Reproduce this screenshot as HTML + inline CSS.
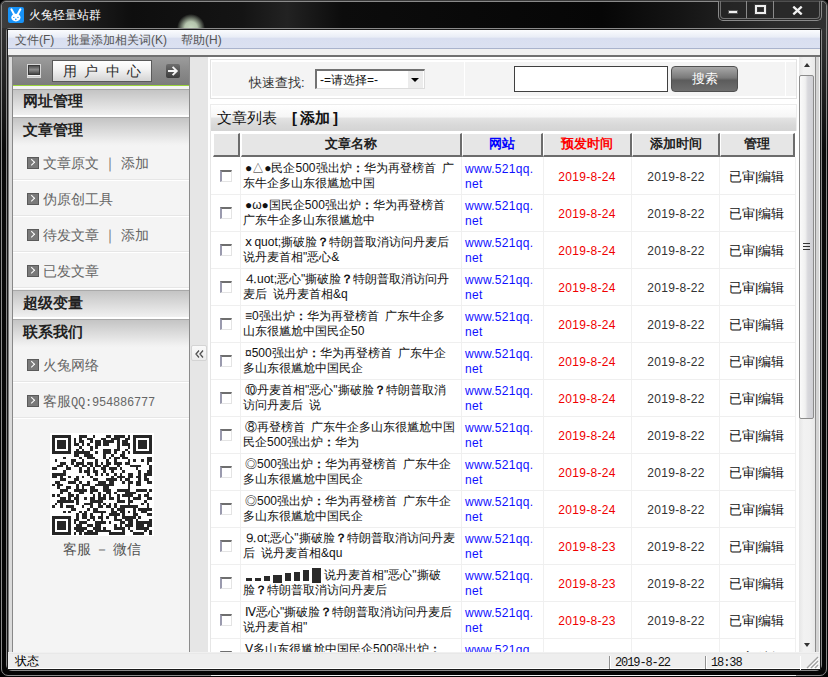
<!DOCTYPE html>
<html><head><meta charset="utf-8">
<style>
*{box-sizing:border-box;margin:0;padding:0}
html,body{width:828px;height:677px;overflow:hidden;background:#000}
body{font-family:"Liberation Sans",sans-serif;font-size:12px;color:#222;position:relative}
.a{position:absolute}
#win{left:0;top:0;width:828px;height:677px;background:linear-gradient(#3a3a3a,#2c2c2c 50px,#0a0a0a 150px,#050505);border-radius:6px 6px 8px 8px}
#fr1{left:1px;top:1px;width:826px;height:675px;border:1px solid #8a8a8a;border-radius:5px 5px 7px 7px}
#fr2{left:6px;top:28px;width:816px;height:643px;border:1px solid #8a8a8a;border-radius:3px 3px 6px 6px}
#title{left:2px;top:2px;width:824px;height:26px;background:linear-gradient(90deg,#3e3e3e 0,#2a2a2a 40px,#0e0e0e 130px,#141414 240px,#222 285px,#0c0c0c 340px,#060606 600px,#151515 680px,#2a2a2a 770px,#303030 824px);border-radius:4px 4px 0 0}
#glow{left:177px;top:14px;width:28px;height:28px;border-radius:50%;background:radial-gradient(closest-side,#c8d8c0 0,#b4c4ac 45%,rgba(150,170,140,0) 100%);clip-path:inset(0 0 14px 0)}
#ttext{left:29px;top:7px;font-size:12px;color:#fff}
#ticon{left:8px;top:7px;width:16px;height:16px;border-radius:2px;background:#1893f8}
#btns{left:718px;top:1px;width:104px;height:20px;border:1px solid #8a8a8a;border-top:none;border-radius:0 0 5px 5px;background:rgba(40,40,40,.6)}
#client{left:7px;top:29px;width:814px;height:641px;background:#f0f0f0;border:1px solid #1a1a1a}
#menu{left:8px;top:30px;width:812px;height:19px;background:linear-gradient(#fbfcfe,#e9edf6 40%,#d9dff0 45%,#dbe1f1);border-bottom:1px solid #a9b3cc}
#menu span{position:absolute;top:2px;font-size:12px;color:#555}
#darkline{left:8px;top:55px;width:812px;height:2px;background:#707070}
#left{left:8px;top:57px;width:182px;height:595px;background:#f4f4f4;border-left:1px solid #7a7a7a;border-right:1px solid #8c8c8c}
#lstrip{left:9px;top:57px;width:4px;height:595px;background:#dadada;border-right:1px solid #888}
#lhead{left:13px;top:57px;width:176px;height:28px;background:linear-gradient(#9c9c9c,#8a8a8a 50%,#7c7c7c)}
#green{left:13px;top:85px;width:176px;height:1px;background:#9ad43a}
.hd{position:absolute;left:13px;width:176px;height:29px;border-top:1px solid #a9a9a9;background:linear-gradient(#c4c4c4,#f0f0f0 92%,#fff 94%);font-size:15px;font-weight:bold;color:#222;padding:3px 0 0 10px}
.it{position:absolute;left:13px;width:176px;height:36px;font-size:14px;color:#666;padding:9px 0 0 30px;white-space:nowrap}
.it:after{content:"";position:absolute;left:0;top:33px;width:176px;height:1px;background:#e6e6e6;border-bottom:1px solid #fff}
.it i{position:absolute;left:14px;top:11px;width:12px;height:12px;background:#7a7a7a;border:1px solid #5a5a5a}
.it i:after{content:"";position:absolute;left:0.8px;top:2px;width:3.5px;height:3.5px;border-right:1.8px solid #fff;border-bottom:1.8px solid #fff;transform:rotate(-45deg)}
#split{left:190px;top:57px;width:19px;height:595px;background:#e6e6e6;border-right:1px solid #f6f6f6}
#sbtn{left:191px;top:345px;width:16px;height:16px;border:1px solid #d4d4d4;border-radius:2px;background:linear-gradient(#fafafa,#ececec);font-size:11px;color:#444;text-align:center;line-height:13px;letter-spacing:-2px}
#right{left:208px;top:57px;width:591px;height:595px;background:#fff}
#scroll{left:799px;top:57px;width:21px;height:595px;background:#ececec}
#status{left:8px;top:653px;width:812px;height:16px;background:#eeeeee;border-top:1px solid #e8e8e8;border-bottom:1px solid #fff}
#status span{position:absolute;top:3px;font-size:12px;color:#111}
.mono{font-family:"Liberation Mono",monospace;font-size:11px;letter-spacing:-1.1px}
/* right */
#sbox{left:210px;top:59px;width:587px;height:40px;border:1px solid #e2e2e2;background:#fff}
.sc{position:absolute;top:2px;height:34px;background:#f4f4f4}
#lhdr{left:210px;top:104px;width:587px;height:27px;border:1px solid #ececec;border-bottom:none;background:linear-gradient(#fff,#f6f6f6 45%,#e2e2e2 52%,#d8d8d8 80%,#d4d4d4)}
.th{position:absolute;top:133px;height:24px;background:#e6e6e6;border-top:1px solid #fff;border-left:1px solid #fff;border-right:2px solid #6c6c6c;border-bottom:2px solid #6c6c6c;font-weight:bold;font-size:13px;text-align:center;line-height:20px;color:#222}
.tr{position:absolute;left:211px;width:585px;height:38px;border-bottom:1px solid #efefef;letter-spacing:0.3px}
.tr>div{position:absolute;top:0}
.cb{left:9px!important;top:13px!important;width:12px;height:12px;border-top:2px solid #6e6e6e;border-left:2px solid #9a9aae;border-right:1px solid #e4e4e4;border-bottom:1px solid #e4e4e4;background:#fff}
.tt{left:32px;width:219px;font-size:12px;line-height:15px;padding-top:4px;letter-spacing:0;color:#111;white-space:nowrap}
.tt div:first-child{padding-left:2px}
.ws{left:254px;color:#1010ff;font-size:12px;line-height:15px;padding-top:5px}
.d1{left:332px;width:88px;text-align:center;color:#f00000;padding-top:13px}
.d2{left:422px;width:86px;text-align:center;color:#333;padding-top:13px}
.mg{left:508px;width:75px;text-align:center;color:#111;padding-top:11px;letter-spacing:-0.2px;font-size:13px}
.vl{position:absolute;top:157px;width:1px;height:495px;background:#f0f0f0}
</style></head><body>
<div id="win" class="a"></div>
<div id="fr1" class="a"></div>
<div id="title" class="a"></div>
<div id="fr2" class="a"></div>
<div id="glow" class="a"></div>
<div id="ticon" class="a"><svg width="16" height="16" viewBox="0 0 16 16"><path d="M3.4 2.3L6.2 7.5M12.4 2.3L9.6 7.5" stroke="#fff" stroke-width="2" stroke-linecap="round"/><ellipse cx="7.9" cy="10.6" rx="4.6" ry="3.9" fill="#fff"/><path d="M5 10.4h1.5M9.2 10.4h1.5" stroke="#1893f8" stroke-width="0.9"/><circle cx="7.8" cy="12.4" r="0.8" fill="#1893f8"/></svg></div>
<div id="ttext" class="a">火兔轻量站群</div>
<div id="btns" class="a"></div>
<div class="a" style="left:720px;top:1px;width:100px;height:18px;border:1px solid #707070;border-top:none;border-radius:0 0 4px 4px"></div>
<div class="a" style="left:746px;top:1px;width:1px;height:17px;background:#8a8a8a"></div>
<div class="a" style="left:773px;top:1px;width:1px;height:17px;background:#8a8a8a"></div>
<div class="a" style="left:728px;top:10px;width:10px;height:4px;background:#f0f0f0;border:1px solid #555"></div>
<div class="a" style="left:755px;top:5px;width:11px;height:9px;border:2px solid #eeeeee;border-top-width:2.5px;box-shadow:0 0 0 1px #3a3a3a,inset 0 0 0 1px #3a3a3a"></div>
<svg class="a" style="left:792px;top:6px" width="11" height="9" viewBox="0 0 11 9"><path d="M1.3 0.6L9.7 8.4M9.7 0.6L1.3 8.4" stroke="#f2f2f2" stroke-width="2.3"/></svg>
<div id="client" class="a"></div>
<div id="menu" class="a">
 <span style="left:7px">文件(F)</span>
 <span style="left:59px">批量添加相关词(K)</span>
 <span style="left:173px">帮助(H)</span>
</div>
<div id="darkline" class="a"></div>

<div id="left" class="a"></div>
<div id="lstrip" class="a"></div>
<div id="lhead" class="a"></div>
<div id="green" class="a"></div>
<div class="a" style="left:27px;top:64px;width:14px;height:14px;background:#f2f2f2;border:1px solid #d8d8d8"></div>
<div class="a" style="left:28px;top:65px;width:12px;height:10px;background:linear-gradient(#505050,#8a8a8a 45%,#7a7a7a 60%,#444);border:1px solid #3a3a3a"></div><div class="a" style="left:28px;top:76px;width:12px;height:1px;background:#c8c8c8"></div>
<div class="a" style="left:52px;top:60px;width:100px;height:22px;border:1px solid #5a5a5a;background:linear-gradient(#fff,#f4f4f4 40%,#d4d4d4);font-size:14px;color:#2a2a2a;letter-spacing:7.4px;padding-left:10px;line-height:20px;white-space:nowrap">用户中心</div>
<div class="a" style="left:166px;top:64px;width:14px;height:14px;border-radius:2px;background:linear-gradient(#6e6e6e,#3c3c3c)"></div>
<svg class="a" style="left:166px;top:64px" width="14" height="14" viewBox="0 0 14 14"><path d="M2 7h8.5M6.6 2.8L10.8 7L6.6 11.2" stroke="#f4f4f4" stroke-width="1.9" fill="none"/></svg>
<div class="hd" style="top:89px;height:28px;padding-top:2px">网址管理</div>
<div class="hd" style="top:117px;background:linear-gradient(#c4c4c4,#f2f2f2 92%,#f4f4f4)">文章管理</div>
<div class="it" style="top:146px"><i></i>文章原文 ｜ 添加</div>
<div class="it" style="top:182px"><i></i>伪原创工具</div>
<div class="it" style="top:218px"><i></i>待发文章 ｜ 添加</div>
<div class="it" style="top:254px"><i></i>已发文章</div>
<div class="hd" style="top:290px">超级变量</div>
<div class="hd" style="top:319px;background:linear-gradient(#c4c4c4,#f2f2f2 92%,#f4f4f4)">联系我们</div>
<div class="it" style="top:348px"><i></i>火兔网络</div>
<div class="it" style="top:384px"><i></i>客服<span style="font-family:'Liberation Mono',monospace;font-size:12px;letter-spacing:-0.2px">QQ:954886777</span></div>
<div class="a" style="left:50px;top:433px;width:104px;height:103px;background:#fff"></div>
<svg class="a" style="left:52px;top:435px" width="100" height="100" viewBox="0 0 37 37" shape-rendering="crispEdges"><path fill="#262626" d="M0 0h7v1h-7zM10 0h3v1h-3zM15 0h1v1h-1zM20 0h2v1h-2zM23 0h4v1h-4zM28 0h1v1h-1zM30 0h7v1h-7zM0 1h1v1h-1zM6 1h1v1h-1zM8 1h1v1h-1zM10 1h1v1h-1zM13 1h2v1h-2zM18 1h2v1h-2zM22 1h3v1h-3zM27 1h2v1h-2zM30 1h1v1h-1zM36 1h1v1h-1zM0 2h1v1h-1zM2 2h3v1h-3zM6 2h1v1h-1zM8 2h1v1h-1zM10 2h2v1h-2zM14 2h1v1h-1zM16 2h2v1h-2zM19 2h4v1h-4zM24 2h1v1h-1zM26 2h2v1h-2zM30 2h1v1h-1zM32 2h3v1h-3zM36 2h1v1h-1zM0 3h1v1h-1zM2 3h3v1h-3zM6 3h1v1h-1zM8 3h2v1h-2zM11 3h1v1h-1zM13 3h1v1h-1zM16 3h2v1h-2zM19 3h2v1h-2zM24 3h1v1h-1zM26 3h3v1h-3zM30 3h1v1h-1zM32 3h3v1h-3zM36 3h1v1h-1zM0 4h1v1h-1zM2 4h3v1h-3zM6 4h1v1h-1zM10 4h1v1h-1zM14 4h1v1h-1zM16 4h1v1h-1zM24 4h1v1h-1zM28 4h1v1h-1zM30 4h1v1h-1zM32 4h3v1h-3zM36 4h1v1h-1zM0 5h1v1h-1zM6 5h1v1h-1zM9 5h1v1h-1zM11 5h1v1h-1zM14 5h1v1h-1zM19 5h3v1h-3zM23 5h2v1h-2zM27 5h1v1h-1zM30 5h1v1h-1zM36 5h1v1h-1zM0 6h7v1h-7zM8 6h6v1h-6zM16 6h1v1h-1zM19 6h3v1h-3zM23 6h1v1h-1zM26 6h1v1h-1zM28 6h1v1h-1zM30 6h7v1h-7zM8 7h2v1h-2zM12 7h3v1h-3zM19 7h1v1h-1zM22 7h1v1h-1zM25 7h2v1h-2zM4 8h1v1h-1zM10 8h1v1h-1zM13 8h3v1h-3zM19 8h1v1h-1zM21 8h1v1h-1zM23 8h2v1h-2zM26 8h2v1h-2zM35 8h2v1h-2zM1 9h1v1h-1zM7 9h2v1h-2zM11 9h1v1h-1zM16 9h1v1h-1zM20 9h1v1h-1zM23 9h1v1h-1zM28 9h1v1h-1zM30 9h1v1h-1zM33 9h1v1h-1zM35 9h2v1h-2zM3 10h2v1h-2zM7 10h1v1h-1zM9 10h3v1h-3zM13 10h2v1h-2zM16 10h1v1h-1zM18 10h1v1h-1zM20 10h2v1h-2zM23 10h3v1h-3zM27 10h2v1h-2zM35 10h1v1h-1zM2 11h2v1h-2zM5 11h1v1h-1zM8 11h2v1h-2zM11 11h2v1h-2zM14 11h1v1h-1zM16 11h2v1h-2zM19 11h2v1h-2zM24 11h1v1h-1zM29 11h4v1h-4zM36 11h1v1h-1zM0 12h2v1h-2zM5 12h2v1h-2zM10 12h1v1h-1zM13 12h1v1h-1zM15 12h1v1h-1zM18 12h2v1h-2zM21 12h3v1h-3zM25 12h1v1h-1zM31 12h1v1h-1zM36 12h1v1h-1zM4 13h1v1h-1zM10 13h1v1h-1zM12 13h2v1h-2zM15 13h2v1h-2zM19 13h1v1h-1zM22 13h1v1h-1zM26 13h1v1h-1zM32 13h1v1h-1zM35 13h2v1h-2zM0 14h5v1h-5zM13 14h1v1h-1zM16 14h1v1h-1zM18 14h1v1h-1zM20 14h1v1h-1zM23 14h1v1h-1zM25 14h1v1h-1zM28 14h2v1h-2zM32 14h1v1h-1zM34 14h3v1h-3zM0 15h2v1h-2zM3 15h1v1h-1zM6 15h1v1h-1zM9 15h1v1h-1zM11 15h1v1h-1zM14 15h1v1h-1zM22 15h1v1h-1zM24 15h3v1h-3zM28 15h2v1h-2zM31 15h2v1h-2zM34 15h1v1h-1zM3 16h2v1h-2zM8 16h2v1h-2zM15 16h2v1h-2zM20 16h4v1h-4zM25 16h1v1h-1zM27 16h2v1h-2zM32 16h1v1h-1zM34 16h2v1h-2zM1 17h2v1h-2zM6 17h3v1h-3zM10 17h1v1h-1zM13 17h1v1h-1zM17 17h3v1h-3zM21 17h2v1h-2zM26 17h1v1h-1zM28 17h2v1h-2zM31 17h2v1h-2zM35 17h2v1h-2zM0 18h1v1h-1zM2 18h2v1h-2zM9 18h1v1h-1zM11 18h3v1h-3zM16 18h7v1h-7zM28 18h1v1h-1zM31 18h2v1h-2zM2 19h1v1h-1zM5 19h2v1h-2zM9 19h1v1h-1zM11 19h1v1h-1zM14 19h2v1h-2zM19 19h2v1h-2zM28 19h1v1h-1zM3 20h3v1h-3zM8 20h5v1h-5zM14 20h3v1h-3zM19 20h3v1h-3zM24 20h5v1h-5zM31 20h4v1h-4zM36 20h1v1h-1zM3 21h1v1h-1zM6 21h1v1h-1zM10 21h2v1h-2zM14 21h1v1h-1zM17 21h1v1h-1zM20 21h2v1h-2zM23 21h1v1h-1zM27 21h4v1h-4zM35 21h1v1h-1zM0 22h1v1h-1zM2 22h1v1h-1zM6 22h2v1h-2zM9 22h1v1h-1zM15 22h1v1h-1zM17 22h1v1h-1zM19 22h1v1h-1zM21 22h1v1h-1zM24 22h1v1h-1zM26 22h4v1h-4zM32 22h1v1h-1zM34 22h2v1h-2zM3 23h2v1h-2zM6 23h1v1h-1zM8 23h2v1h-2zM12 23h1v1h-1zM14 23h2v1h-2zM17 23h3v1h-3zM21 23h2v1h-2zM24 23h1v1h-1zM28 23h1v1h-1zM30 23h3v1h-3zM35 23h2v1h-2zM2 24h6v1h-6zM9 24h1v1h-1zM14 24h5v1h-5zM24 24h3v1h-3zM28 24h2v1h-2zM34 24h1v1h-1zM1 25h1v1h-1zM3 25h1v1h-1zM9 25h1v1h-1zM12 25h3v1h-3zM17 25h1v1h-1zM19 25h1v1h-1zM21 25h1v1h-1zM23 25h1v1h-1zM28 25h1v1h-1zM33 25h1v1h-1zM35 25h1v1h-1zM0 26h1v1h-1zM3 26h1v1h-1zM5 26h3v1h-3zM11 26h1v1h-1zM14 26h1v1h-1zM17 26h2v1h-2zM20 26h2v1h-2zM23 26h1v1h-1zM25 26h7v1h-7zM35 26h1v1h-1zM7 27h2v1h-2zM13 27h1v1h-1zM15 27h2v1h-2zM22 27h1v1h-1zM24 27h3v1h-3zM30 27h1v1h-1zM32 27h5v1h-5zM4 28h1v1h-1zM6 28h1v1h-1zM10 28h1v1h-1zM12 28h1v1h-1zM15 28h5v1h-5zM22 28h2v1h-2zM25 28h2v1h-2zM28 28h1v1h-1zM30 28h1v1h-1zM33 28h2v1h-2zM9 29h1v1h-1zM11 29h2v1h-2zM14 29h1v1h-1zM18 29h1v1h-1zM21 29h4v1h-4zM26 29h1v1h-1zM30 29h2v1h-2zM35 29h2v1h-2zM0 30h7v1h-7zM9 30h1v1h-1zM11 30h2v1h-2zM14 30h2v1h-2zM17 30h2v1h-2zM20 30h1v1h-1zM23 30h1v1h-1zM26 30h5v1h-5zM32 30h1v1h-1zM0 31h1v1h-1zM6 31h1v1h-1zM8 31h2v1h-2zM13 31h1v1h-1zM15 31h1v1h-1zM18 31h1v1h-1zM23 31h3v1h-3zM27 31h3v1h-3zM31 31h1v1h-1zM36 31h1v1h-1zM0 32h1v1h-1zM2 32h3v1h-3zM6 32h1v1h-1zM8 32h1v1h-1zM10 32h3v1h-3zM16 32h4v1h-4zM21 32h1v1h-1zM25 32h2v1h-2zM28 32h2v1h-2zM31 32h6v1h-6zM0 33h1v1h-1zM2 33h3v1h-3zM6 33h1v1h-1zM9 33h2v1h-2zM13 33h2v1h-2zM16 33h2v1h-2zM23 33h1v1h-1zM25 33h1v1h-1zM27 33h3v1h-3zM31 33h3v1h-3zM35 33h2v1h-2zM0 34h1v1h-1zM2 34h3v1h-3zM6 34h1v1h-1zM8 34h5v1h-5zM15 34h3v1h-3zM19 34h1v1h-1zM23 34h4v1h-4zM28 34h1v1h-1zM31 34h5v1h-5zM0 35h1v1h-1zM6 35h1v1h-1zM9 35h3v1h-3zM13 35h2v1h-2zM16 35h6v1h-6zM26 35h1v1h-1zM29 35h1v1h-1zM34 35h1v1h-1zM36 35h1v1h-1zM0 36h7v1h-7zM8 36h1v1h-1zM10 36h1v1h-1zM12 36h5v1h-5zM21 36h6v1h-6zM30 36h4v1h-4zM36 36h1v1h-1z"/></svg>
<div class="a" style="left:63px;top:541px;font-size:14px;color:#555">客服 － 微信</div>

<div id="split" class="a"></div>
<div id="sbtn" class="a"></div>
<svg class="a" style="left:195px;top:350px" width="9" height="8" viewBox="0 0 9 8"><path d="M4 0.5L1 4L4 7.5M8 0.5L5 4L8 7.5" stroke="#505050" stroke-width="1.3" fill="none"/></svg>

<div id="right" class="a"></div>
<div id="sbox" class="a">
 <div class="sc" style="left:1px;width:252px"></div>
 <div class="sc" style="left:254px;width:320px"></div>
 <div class="sc" style="left:575px;width:10px"></div>
</div>
<div class="a" style="left:249px;top:74px;font-size:13px;color:#333">快速查找:</div>
<div class="a" style="left:315px;top:69px;width:110px;height:20px;background:#fff;border-top:2px solid #727272;border-left:2px solid #727272;border-right:1px solid #dcdcdc;border-bottom:1px solid #dcdcdc"></div>
<div class="a" style="left:320px;top:72px;font-size:12px;color:#111">-=请选择=-</div>
<div class="a" style="left:407px;top:71px;width:16px;height:17px;background:#ececec;border-left:1px solid #fff"></div>
<div class="a" style="left:411px;top:78px;width:0;height:0;border-left:4px solid transparent;border-right:4px solid transparent;border-top:4px solid #000"></div>
<div class="a" style="left:514px;top:66px;width:154px;height:26px;background:#fff;border:1px solid #404040"></div>
<div class="a" style="left:671px;top:66px;width:67px;height:26px;border:1px solid #505050;border-radius:4px;background:linear-gradient(#a8a8a8,#7a7a7a 45%,#5c5c5c 55%,#6e6e6e);color:#fff;font-size:13px;text-align:center;line-height:24px">搜索</div>

<div id="lhdr" class="a"></div>
<div class="a" style="left:217px;top:109px;font-size:15px;font-weight:500;color:#111;white-space:nowrap">文章列表</div><div class="a" style="left:292px;top:109px;font-size:15px;font-weight:500;color:#111;white-space:nowrap"><b>[</b>&thinsp;<b style="font-weight:700">添加</b>&thinsp;<b>]</b></div>
<div class="th" style="left:213px;width:27px"></div>
<div class="th" style="left:241px;width:221px">文章名称</div>
<div class="th" style="left:462px;width:81px;color:#0000ff">网站</div>
<div class="th" style="left:543px;width:89px;color:#f00">预发时间</div>
<div class="th" style="left:632px;width:88px">添加时间</div>
<div class="th" style="left:720px;width:75px">管理</div>
<div class="a" style="left:210px;top:131px;width:1px;height:521px;background:#e6e6e6"></div>
<div class="vl" style="left:240px"></div>
<div class="vl" style="left:461px"></div>
<div class="vl" style="left:543px"></div>
<div class="vl" style="left:631px"></div>
<div class="vl" style="left:719px"></div>
<div class="vl" style="left:795px"></div>
<div class="tr" style="top:157px">
<div class="cb"></div>
<div class="tt"><div>●△●民企500强出炉<b>：</b>华为再登榜首&ensp;广</div><div>东牛企多山东很尴尬中国</div></div>
<div class="ws">www.521qq.<br>net</div>
<div class="d1">2019-8-24</div>
<div class="d2">2019-8-22</div>
<div class="mg">已审|编辑</div>
</div>
<div class="tr" style="top:194px">
<div class="cb"></div>
<div class="tt"><div>●ω●国民企500强出炉<b>：</b>华为再登榜首</div><div>广东牛企多山东很尴尬中</div></div>
<div class="ws">www.521qq.<br>net</div>
<div class="d1">2019-8-24</div>
<div class="d2">2019-8-22</div>
<div class="mg">已审|编辑</div>
</div>
<div class="tr" style="top:231px">
<div class="cb"></div>
<div class="tt"><div>ⅹ&thinsp;quot;撕破脸<b>？</b>特朗普取消访问丹麦后</div><div>说丹麦首相&quot;恶心&amp;</div></div>
<div class="ws">www.521qq.<br>net</div>
<div class="d1">2019-8-24</div>
<div class="d2">2019-8-22</div>
<div class="mg">已审|编辑</div>
</div>
<div class="tr" style="top:268px">
<div class="cb"></div>
<div class="tt"><div>⒋uot;恶心&quot;撕破脸<b>？</b>特朗普取消访问丹</div><div>麦后&ensp;说丹麦首相&amp;q</div></div>
<div class="ws">www.521qq.<br>net</div>
<div class="d1">2019-8-24</div>
<div class="d2">2019-8-22</div>
<div class="mg">已审|编辑</div>
</div>
<div class="tr" style="top:305px">
<div class="cb"></div>
<div class="tt"><div>≡0强出炉<b>：</b>华为再登榜首&ensp;广东牛企多</div><div>山东很尴尬中国民企50</div></div>
<div class="ws">www.521qq.<br>net</div>
<div class="d1">2019-8-24</div>
<div class="d2">2019-8-22</div>
<div class="mg">已审|编辑</div>
</div>
<div class="tr" style="top:342px">
<div class="cb"></div>
<div class="tt"><div>¤500强出炉<b>：</b>华为再登榜首&ensp;广东牛企</div><div>多山东很尴尬中国民企</div></div>
<div class="ws">www.521qq.<br>net</div>
<div class="d1">2019-8-24</div>
<div class="d2">2019-8-22</div>
<div class="mg">已审|编辑</div>
</div>
<div class="tr" style="top:379px">
<div class="cb"></div>
<div class="tt"><div>⑩丹麦首相&quot;恶心&quot;撕破脸<b>？</b>特朗普取消</div><div>访问丹麦后&ensp;说</div></div>
<div class="ws">www.521qq.<br>net</div>
<div class="d1">2019-8-24</div>
<div class="d2">2019-8-22</div>
<div class="mg">已审|编辑</div>
</div>
<div class="tr" style="top:416px">
<div class="cb"></div>
<div class="tt"><div>⑧再登榜首&ensp;广东牛企多山东很尴尬中国</div><div>民企500强出炉<b>：</b>华为</div></div>
<div class="ws">www.521qq.<br>net</div>
<div class="d1">2019-8-24</div>
<div class="d2">2019-8-22</div>
<div class="mg">已审|编辑</div>
</div>
<div class="tr" style="top:453px">
<div class="cb"></div>
<div class="tt"><div>◎500强出炉<b>：</b>华为再登榜首&ensp;广东牛企</div><div>多山东很尴尬中国民企</div></div>
<div class="ws">www.521qq.<br>net</div>
<div class="d1">2019-8-24</div>
<div class="d2">2019-8-22</div>
<div class="mg">已审|编辑</div>
</div>
<div class="tr" style="top:490px">
<div class="cb"></div>
<div class="tt"><div>◎500强出炉<b>：</b>华为再登榜首&ensp;广东牛企</div><div>多山东很尴尬中国民企</div></div>
<div class="ws">www.521qq.<br>net</div>
<div class="d1">2019-8-24</div>
<div class="d2">2019-8-22</div>
<div class="mg">已审|编辑</div>
</div>
<div class="tr" style="top:527px">
<div class="cb"></div>
<div class="tt"><div>⒐ot;恶心&quot;撕破脸<b>？</b>特朗普取消访问丹麦</div><div>后&ensp;说丹麦首相&amp;qu</div></div>
<div class="ws">www.521qq.<br>net</div>
<div class="d1">2019-8-23</div>
<div class="d2">2019-8-22</div>
<div class="mg">已审|编辑</div>
</div>
<div class="tr" style="top:564px">
<div class="cb"></div>
<div class="tt"><div><span style="display:inline-block;width:79px"></span>说丹麦首相&quot;恶心&quot;撕破</div><div>脸<b>？</b>特朗普取消访问丹麦后</div></div><svg style="position:absolute;left:35px;top:4px" width="76" height="15" viewBox="0 0 76 15" shape-rendering="crispEdges"><path fill="#2a2a2a" d="M0 10h6v3h-6zM9 10h6v3h-6zM18 8h6v5h-6zM27 7h9v8h-9zM39 5h6v8h-6zM48 4h6v9h-6zM57 2h6v11h-6zM66 0h9v15h-9z"/></svg>
<div class="ws">www.521qq.<br>net</div>
<div class="d1">2019-8-23</div>
<div class="d2">2019-8-22</div>
<div class="mg">已审|编辑</div>
</div>
<div class="tr" style="top:601px">
<div class="cb"></div>
<div class="tt"><div>Ⅳ恶心&quot;撕破脸<b>？</b>特朗普取消访问丹麦后</div><div>说丹麦首相&quot;</div></div>
<div class="ws">www.521qq.<br>net</div>
<div class="d1">2019-8-23</div>
<div class="d2">2019-8-22</div>
<div class="mg">已审|编辑</div>
</div>
<div class="tr" style="top:638px">
<div class="cb"></div>
<div class="tt"><div>Ⅴ多山东很尴尬中国民企500强出炉<b>：</b></div><div></div></div>
<div class="ws">www.521qq.<br>net</div>
<div class="d1">2019-8-23</div>
<div class="d2">2019-8-22</div>
<div class="mg">已审|编辑</div>
</div>
<div class="a" style="left:208px;top:652px;width:612px;height:1px;background:#f0f0f0"></div>

<div id="scroll" class="a"></div>
<div class="a" style="left:799px;top:57px;width:16px;height:595px;background:linear-gradient(90deg,#e6e6e6,#f2f2f2 30%,#f0f0f0 70%,#e8e8e8)"></div>
<div class="a" style="left:815px;top:57px;width:1px;height:595px;background:#8c8c8c"></div>
<div class="a" style="left:816px;top:57px;width:3px;height:595px;background:#d4d4d4"></div>
<div class="a" style="left:819px;top:57px;width:1px;height:595px;background:#f4f4f4"></div>
<div class="a" style="left:804px;top:63px;width:0;height:0;border-left:3.5px solid transparent;border-right:3.5px solid transparent;border-bottom:4px solid #333"></div>
<div class="a" style="left:804px;top:643px;width:0;height:0;border-left:3.5px solid transparent;border-right:3.5px solid transparent;border-top:4px solid #333"></div>
<div class="a" style="left:799px;top:75px;width:15px;height:344px;border:1px solid #8c8c8c;border-radius:2px;background:linear-gradient(90deg,#fafafa,#f0f0f0 40%,#d8d8dc 60%,#cfcfd4)"></div>
<div class="a" style="left:803px;top:243px;width:7px;height:1px;background:#333;box-shadow:0 3px 0 #333,0 6px 0 #333"></div>
<div id="status" class="a">
 <span style="left:7px;top:-1px;color:#000">状态</span>
 <i class="a" style="left:601px;top:2px;width:2px;height:13px;background:#909090;border-right:1px solid #fff"></i>
 <i class="a" style="left:697px;top:2px;width:2px;height:13px;background:#909090;border-right:1px solid #fff"></i>
 <i class="a" style="left:792px;top:2px;width:1px;height:14px;background:#fff"></i>
 <svg class="a" style="left:798px;top:2px" width="13" height="13" viewBox="0 0 13 13"><path d="M12 1L1 12M12 5L5 12M12 9L9 12" stroke="#a0a0a0" stroke-width="1.3"/><path d="M13 2L2 13M13 6L6 13M13 10L10 13" stroke="#fff" stroke-width="0.9"/></svg>
 <span class="mono" style="left:607px;top:2px">2019-8-22</span>
 <span class="mono" style="left:703px;top:2px">18:38</span>
</div>
</body></html>
